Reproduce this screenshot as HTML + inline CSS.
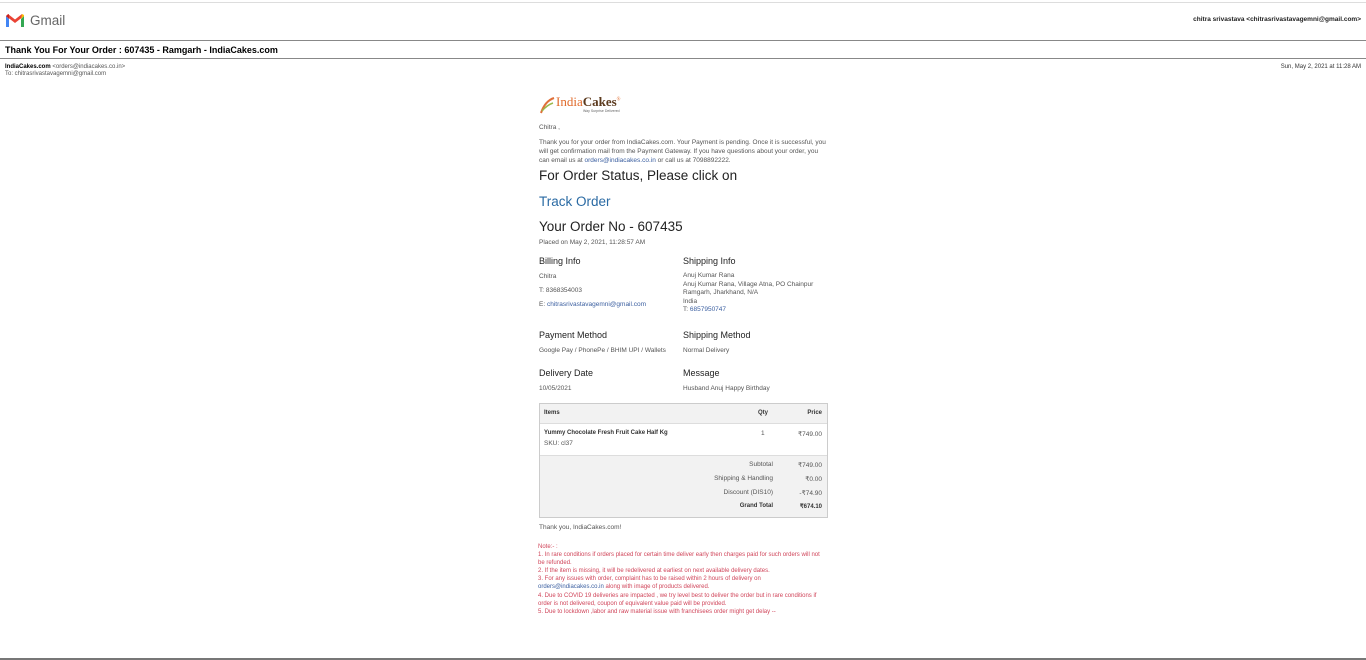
<!DOCTYPE html>
<html><head><meta charset="utf-8"><style>
body{margin:0;width:1366px;height:660px;background:#fff;font-family:"Liberation Sans",Arial,sans-serif;color:#222;position:relative;overflow:hidden}
.a{position:absolute;white-space:nowrap}
.s{font-size:6.5px;color:#555}
.h{font-size:9px;color:#222}
.r{font-size:6px;color:#d0455a}
</style></head><body>
<div class="a" style="left:0;top:2px;width:1366px;border-top:1px solid #ddd"></div>
<svg class="a" style="left:5px;top:13px" width="20" height="15" viewBox="0 0 20 15">
<path d="M1 3v11h3V6z" fill="#4285f4"/><path d="M16 6v8h3V3z" fill="#34a853"/>
<path d="M1 3l9 7 9-7-2-2-7 5.5L3 1z" fill="#ea4335"/><path d="M16 6l3-3V2l-2-1z" fill="#fbbc04"/><path d="M1 3l3 3V1z" fill="#c5221f"/></svg>
<div class="a" style="left:30px;top:13px;font-size:13.5px;color:#666">Gmail</div>
<div class="a" style="right:5px;top:16px;font-size:6.5px;color:#222;font-weight:bold">chitra srivastava &lt;chitrasrivastavagemni@gmail.com&gt;</div>
<div class="a" style="left:0;top:40px;width:1366px;border-top:1px solid #888"></div>
<div class="a" style="left:5px;top:45px;font-size:9px;color:#000;font-weight:bold">Thank You For Your Order : 607435 - Ramgarh - IndiaCakes.com</div>
<div class="a" style="left:0;top:58px;width:1366px;border-top:1px solid #888"></div>
<div class="a" style="left:5px;top:64px;font-size:6px;color:#000"><b>IndiaCakes.com</b> <span style="color:#555">&lt;orders@indiacakes.co.in&gt;</span></div>
<div class="a" style="left:5px;top:71px;font-size:6px;color:#555">To: chitrasrivastavagemni@gmail.com</div>
<div class="a" style="right:5px;top:64px;font-size:6px;color:#333">Sun, May 2, 2021 at 11:28 AM</div>

<svg class="a" style="left:539px;top:95px" width="16" height="20"><path d="M2 18 Q6 6 15 3" stroke="#e0703a" stroke-width="2" fill="none"/><path d="M3 16 Q8 10 14 8" stroke="#9bb84a" stroke-width="1.5" fill="none"/></svg>
<div class="a" style="left:556px;top:94px;font-size:13px;font-family:'Liberation Serif',serif;color:#e06a2a">India<span style="color:#5c3a1e;font-weight:bold">Cakes</span><sup style="font-size:5px">®</sup></div>
<div class="a" style="left:583px;top:109px;font-size:3.5px;color:#666">Way Surprise Delivered</div>

<div class="a s" style="left:539px;top:124px">Chitra ,</div>
<div class="a s" style="left:539px;top:138px;line-height:9px">Thank you for your order from IndiaCakes.com. Your Payment is pending. Once it is successful, you<br>will get confirmation mail from the Payment Gateway. If you have questions about your order, you<br>can email us at <span style="color:#3b5fa0">orders@indiacakes.co.in</span> or call us at 7098892222.</div>
<div class="a" style="left:539px;top:168px;font-size:13.5px;color:#222">For Order Status, Please click on</div>
<div class="a" style="left:539px;top:194px;font-size:13.5px;color:#2a6aa3">Track Order</div>
<div class="a" style="left:539px;top:219px;font-size:13.5px;color:#222">Your Order No - 607435</div>
<div class="a s" style="left:539px;top:239px">Placed on May 2, 2021, 11:28:57 AM</div>

<div class="a h" style="left:539px;top:256px">Billing Info</div>
<div class="a s" style="left:539px;top:273px">Chitra</div>
<div class="a s" style="left:539px;top:287px">T: 8368354003</div>
<div class="a s" style="left:539px;top:301px">E: <span style="color:#3b5fa0">chitrasrivastavagemni@gmail.com</span></div>
<div class="a h" style="left:683px;top:256px">Shipping Info</div>
<div class="a s" style="left:683px;top:272px;line-height:8.5px">Anuj Kumar Rana<br>Anuj Kumar Rana, Village Atna, PO Chainpur<br>Ramgarh, Jharkhand, N/A<br>India<br>T: <span style="color:#3b5fa0">6857950747</span></div>
<div class="a h" style="left:539px;top:330px">Payment Method</div>
<div class="a s" style="left:539px;top:347px">Google Pay / PhonePe / BHIM UPI / Wallets</div>
<div class="a h" style="left:683px;top:330px">Shipping Method</div>
<div class="a s" style="left:683px;top:347px">Normal Delivery</div>
<div class="a h" style="left:539px;top:368px">Delivery Date</div>
<div class="a s" style="left:539px;top:385px">10/05/2021</div>
<div class="a h" style="left:683px;top:368px">Message</div>
<div class="a s" style="left:683px;top:385px">Husband Anuj Happy Birthday</div>

<div class="a" style="left:539px;top:403px;width:287px;height:113px;border:1px solid #ccc;background:#f2f2f2"></div>
<div class="a" style="left:540px;top:423px;width:287px;height:31px;background:#fff;border-top:1px solid #ddd;border-bottom:1px solid #ddd"></div>
<div class="a" style="left:544px;top:410px;font-size:6px;font-weight:bold;color:#333">Items</div>
<div class="a" style="left:758px;top:410px;font-size:6px;font-weight:bold;color:#333">Qty</div>
<div class="a" style="right:544px;top:410px;font-size:6px;font-weight:bold;color:#333">Price</div>
<div class="a" style="left:544px;top:430px;font-size:6px;font-weight:bold;color:#333">Yummy Chocolate Fresh Fruit Cake Half Kg</div>
<div class="a s" style="left:544px;top:440px">SKU: cl37</div>
<div class="a s" style="left:761px;top:430px">1</div>
<div class="a s" style="right:544px;top:430px">₹749.00</div>
<div class="a s" style="right:593px;top:461px;text-align:right">Subtotal</div><div class="a s" style="right:544px;top:461px">₹749.00</div>
<div class="a s" style="right:593px;top:475px">Shipping &amp; Handling</div><div class="a s" style="right:544px;top:475px">₹0.00</div>
<div class="a s" style="right:593px;top:489px">Discount (DIS10)</div><div class="a s" style="right:544px;top:489px">-₹74.90</div>
<div class="a" style="right:593px;top:503px;font-size:6px;font-weight:bold;color:#333">Grand Total</div><div class="a" style="right:544px;top:503px;font-size:6px;font-weight:bold;color:#333">₹674.10</div>

<div class="a s" style="left:539px;top:524px">Thank you, IndiaCakes.com!</div>
<div class="a r" style="left:538px;top:543px;line-height:8.1px">Note:- :<br>1. In rare conditions if orders placed for certain time deliver early then charges paid for such orders will not<br>be refunded.<br>2. If the item is missing, it will be redelivered at earliest on next available delivery dates.<br>3. For any issues with order, complaint has to be raised within 2 hours of delivery on<br><span style="color:#3b5fa0">orders@indiacakes.co.in</span> along with image of products delivered.<br>4. Due to COVID 19 deliveries are impacted , we try level best to deliver the order but in rare conditions if<br>order is not delivered, coupon of equivalent value paid will be provided.<br>5. Due to lockdown ,labor and raw material issue with franchisees order might get delay --</div>
<div class="a" style="left:0;top:658px;width:1366px;border-top:2px solid #777"></div>
</body></html>
